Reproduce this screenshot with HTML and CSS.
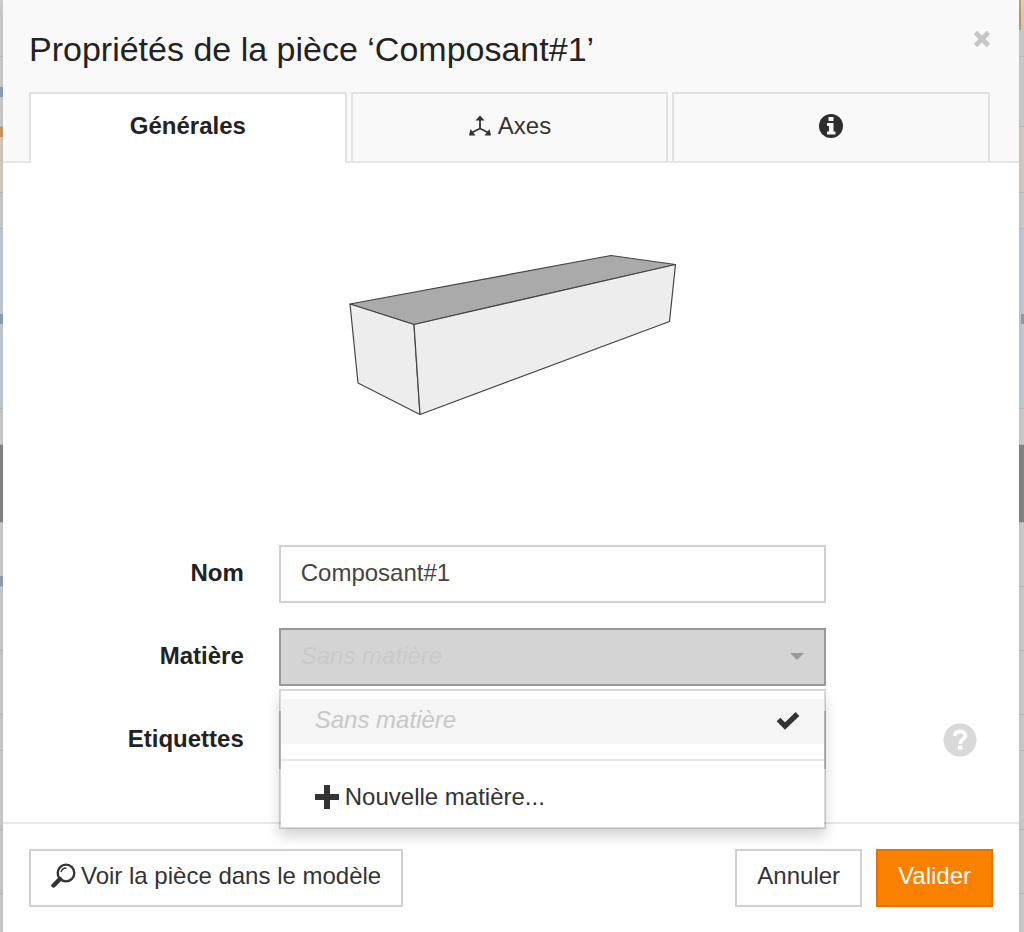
FILE: index.html
```html
<!DOCTYPE html>
<html lang="fr">
<head>
  <meta charset="UTF-8">
  <meta name="viewport" content="width=device-width, initial-scale=1.0">
  <title>Propriétés de la pièce</title>
  <link rel="stylesheet" href="styles.css">
</head>
<body>
  <!-- Dimmed parts list behind the dialog -->
  <div class="page" aria-hidden="true">
    <div class="row row-toolbar"><i></i><i class="mark mark-button"></i></div>
    <div class="row row-title"><i class="mark mark-blue"></i></div>
    <div class="row row-group"><i class="mark mark-orange"></i></div>
    <div class="row row-gap"></div>
    <div class="row row-info"><i class="mark mark-blue"></i><i class="mark mark-blue"></i></div>
    <div class="row row-gap"></div>
    <div class="row row-head"></div>
    <div class="row row-part row-linked"><i class="mark mark-blue"></i></div>
    <div class="row row-part"></div>
    <div class="row row-part"></div>
    <div class="row row-small"></div>
    <div class="row row-sum"></div>
    <div class="row row-part"></div>
    <div class="row row-last"></div>
  </div>

  <div class="modal" role="dialog" aria-labelledby="modal-title">
    <div class="modal-header">
      <div class="title-bar">
        <h1 class="modal-title" id="modal-title">Propriétés de la pièce ‘Composant#1’</h1>
        <button type="button" class="close" aria-label="Fermer">
          <svg width="20" height="18" viewBox="0 0 20 18"><path d="M2.500 2.500L15.500 15.500M15.500 2.500L2.500 15.500" stroke="#c6c6c6" stroke-width="4.600" fill="none"/></svg>
        </button>
      </div>
      <div class="tabs" role="tablist">
        <button type="button" class="tab active" role="tab" aria-selected="true">Générales</button>
        <button type="button" class="tab" role="tab" aria-selected="false">
          <svg width="24" height="22" viewBox="0 0 24 22"><path d="M12 3v10.500M12 13.500L3 18M12 13.500l9 4.500" stroke="#333" stroke-width="1.800" fill="none"/><path d="M12 0.500l4.500 5h-9zM1 20.500L2.500 14l5 6.500zM23 20.500L21.500 14l-5 6.500z" fill="#333"/></svg>
          Axes
        </button>
        <button type="button" class="tab" role="tab" aria-selected="false" aria-label="Informations">
          <svg width="24" height="24" viewBox="0 0 24 24"><circle cx="12" cy="12" r="12" fill="#2d2d2d"/><path d="M9.500 3h5v4h-5zM8 9h6.500v8.500h2v3H8v-3h2V12H8z" fill="#f9f9f9"/></svg>
        </button>
      </div>
    </div>

    <form class="modal-form" id="part-form">
      <div class="modal-body">
        <div class="preview">
          <svg width="328" height="162" viewBox="0 0 328 162" role="img" aria-label="Aperçu de la pièce">
            <g stroke="#444" stroke-width="1.200" stroke-linejoin="round">
              <path d="M1 50L262 1.500 326.500 10.500 65 70.500z" fill="#aaa"/>
              <path d="M1 50L65 70.500 71 160.500 9 129z" fill="#ededed"/>
              <path d="M65 70.500L326.500 10.500 320.500 67.500 71 160.500z" fill="#ededed"/>
            </g>
          </svg>
        </div>

        <div class="form-group">
          <label for="name">Nom</label>
          <input type="text" class="control" id="name" value="Composant#1">
        </div>

        <div class="form-group">
          <label for="material">Matière</label>
          <div class="select">
            <select class="control open" id="material">
              <option>Sans matière</option>
            </select>
            <svg class="caret" width="14" height="7" viewBox="0 0 14 7"><path d="M0 0h14L7 7z" fill="#999"/></svg>
            <div class="menu">
              <button type="button" class="menu-item selected">
                <span>Sans matière</span>
                <svg width="24" height="19" viewBox="0 0 24 19"><path d="M2.500 8.500L9 15 21.500 3" stroke="#333" stroke-width="5.200" fill="none"/></svg>
              </button>
              <div class="divider"></div>
              <button type="button" class="menu-item new">
                <svg width="24" height="24" viewBox="0 0 24 24"><path d="M12 0v24M0 12h24" stroke="#333" stroke-width="6"/></svg>
                <span>Nouvelle matière...</span>
              </button>
            </div>
          </div>
        </div>

        <div class="form-group">
          <label for="tags">Etiquettes</label>
          <input type="text" class="control" id="tags">
          <button type="button" class="help" aria-label="Aide">
            <svg width="34" height="34" viewBox="0 0 34 34"><circle cx="17" cy="17" r="16.500" fill="#d9d9d9"/><path d="M12 13c0-3 2-4.500 5-4.500s5.200 1.500 5.200 4.200c0 3.800-5 3.500-5 8.300" stroke="#fff" stroke-width="3.800" fill="none"/><path d="M15 22.500h4.500v4H15z" fill="#fff"/></svg>
          </button>
        </div>
      </div>

      <div class="modal-footer">
        <button type="button" class="btn btn-view">
          <svg width="25" height="26" viewBox="0 0 25 26"><circle cx="15" cy="10" r="8.300" stroke="#333" stroke-width="2.300" fill="none"/><path d="M10 9c.8-2.600 2.800-4 5.500-4" stroke="#333" stroke-width="1.300" fill="none"/><path d="M9 16L2.500 22.500" stroke="#333" stroke-width="4.400" stroke-linecap="round"/></svg>
          Voir la pièce dans le modèle
        </button>
        <button type="button" class="btn">Annuler</button>
        <button type="submit" class="btn btn-primary">Valider</button>
      </div>
    </form>
  </div>

  <script>
    document.getElementById('part-form').addEventListener('submit', function (e) {
      e.preventDefault();
    });
  </script>
</body>
</html>
```

FILE: styles.css
```css
* {
  box-sizing: border-box;
}

body {
  margin: 0;
  min-height: 100vh;
  display: grid;
  background-color: #cfcfcf;
  font-family: "Liberation Sans", Arial, sans-serif;
  font-size: 24px;
  line-height: 34px;
  color: #333;
}

button,
input,
select {
  font: inherit;
  color: inherit;
}

svg {
  display: block;
  flex: none;
}

/* Page behind the dialog */
.page,
.modal {
  grid-area: 1 / 1;
  min-width: 0;
}

.page {
  display: flex;
  flex-direction: column;
}

.row {
  display: flex;
  justify-content: space-between;
  align-items: center;
  border-bottom: 1px solid #bdbdbd;
}

.row-toolbar { height: 57px; align-items: flex-start; }
.row-title { height: 70px; }
.row-group { height: 66px; background: #d6d0c3; align-items: flex-start; }
.row-gap { height: 36px; }
.row-info { height: 180px; background: #c2ced6; }
.row-head { height: 78px; background: #868686; }
.row-part { height: 64px; }
.row-linked { align-items: flex-end; }
.row-small { height: 36px; }
.row-sum { height: 79px; }
.row-last { flex: 1; border-bottom: none; }

.mark {
  width: 3px;
  height: 10px;
}

.mark-blue { background: #8ba3bb; }
.mark-orange { background: #cf9a66; }

.mark-button {
  width: 5px;
  height: 30px;
  border-left: 2px solid #cf9a66;
}

/* Dialog */
.modal {
  display: flex;
  flex-direction: column;
  margin: 0 5px 0 3px;
  background: #fff;
  box-shadow: 0 8px 12px rgba(0, 0, 0, 0.12);
}

.modal-header {
  background: #f9f9f9;
  border-bottom: 2px solid #e6e6e6;
  padding: 24px 26px 0;
}

.title-bar {
  display: flex;
  justify-content: space-between;
  align-items: flex-start;
  height: 68px;
}

.modal-title {
  margin: 0;
  font-size: 34px;
  font-weight: normal;
  line-height: 50px;
  color: #222;
}

.close {
  margin-top: 6px;
  padding: 0;
  border: none;
  background: none;
  cursor: pointer;
}

.tabs {
  display: flex;
  gap: 4px;
  margin-right: 3px;
}

.tab {
  display: flex;
  flex: 1;
  justify-content: center;
  align-items: center;
  gap: 6px;
  height: 69px;
  padding: 0 0 4px;
  border: 2px solid #e2e2e2;
  border-bottom: none;
  background: #f9f9f9;
  cursor: pointer;
}

.tab.active {
  height: 71px;
  margin-bottom: -2px;
  padding-bottom: 6px;
  background: #fff;
  font-weight: bold;
  color: #222;
}

.modal-form {
  display: flex;
  flex: 1;
  flex-direction: column;
}

.modal-body {
  display: flex;
  flex: 1;
  flex-direction: column;
  gap: 25px;
  padding: 26px 26px 52px;
}

.preview {
  display: flex;
  justify-content: center;
  align-items: center;
  height: 291px;
  margin-bottom: 40px;
  padding-left: 4px;
}

.form-group {
  display: grid;
  grid-template-columns: 215fr 548fr 132fr;
  gap: 35px;
  align-items: center;
}

label {
  text-align: right;
  font-weight: bold;
  color: #222;
  padding-bottom: 2px;
}

.control {
  display: block;
  width: 100%;
  height: 58px;
  padding: 0 20px 2px;
  border: 2px solid #d0d0d0;
  border-radius: 0;
  background: #fff;
  color: #444;
}

.select {
  position: relative;
}

select.control {
  appearance: none;
}

select.open {
  border-color: #999;
  background: #d4d4d4;
  color: #cacaca;
  font-style: italic;
}

.caret {
  position: absolute;
  right: 22px;
  top: 25px;
  pointer-events: none;
}

.menu {
  position: absolute;
  z-index: 1;
  top: 100%;
  left: 0;
  right: 0;
  margin-top: 3px;
  padding: 8px 0;
  border: 2px solid rgba(0, 0, 0, 0.15);
  background: #fff;
  background-clip: padding-box;
  box-shadow: 0 8px 12px rgba(0, 0, 0, 0.16);
}

.menu-item {
  display: flex;
  align-items: center;
  width: 100%;
  height: 45px;
  padding: 0 24px 0 34px;
  border: none;
  background: none;
  text-align: left;
  cursor: pointer;
}

.menu-item.selected {
  justify-content: space-between;
  padding-bottom: 3px;
  background: #f5f5f5;
  color: #c8c8c8;
  font-style: italic;
}

.menu-item.new {
  gap: 6px;
}

.divider {
  height: 2px;
  margin: 15px 0 13px;
  background: #e8e8e8;
}

.help {
  justify-self: end;
  margin-right: 16px;
  padding: 0;
  border: none;
  background: none;
  cursor: pointer;
}

.modal-footer {
  display: flex;
  gap: 14px;
  padding: 25px 26px;
  border-top: 2px solid #e8e8e8;
}

.btn {
  display: flex;
  align-items: center;
  gap: 5px;
  height: 58px;
  padding: 0 20px 4px;
  border: 2px solid #d0d0d0;
  background: #fff;
  cursor: pointer;
}

.btn-view {
  margin-right: auto;
}

.btn-primary {
  border-color: #eb7000;
  background: #f98000;
  color: #fff;
}
```
